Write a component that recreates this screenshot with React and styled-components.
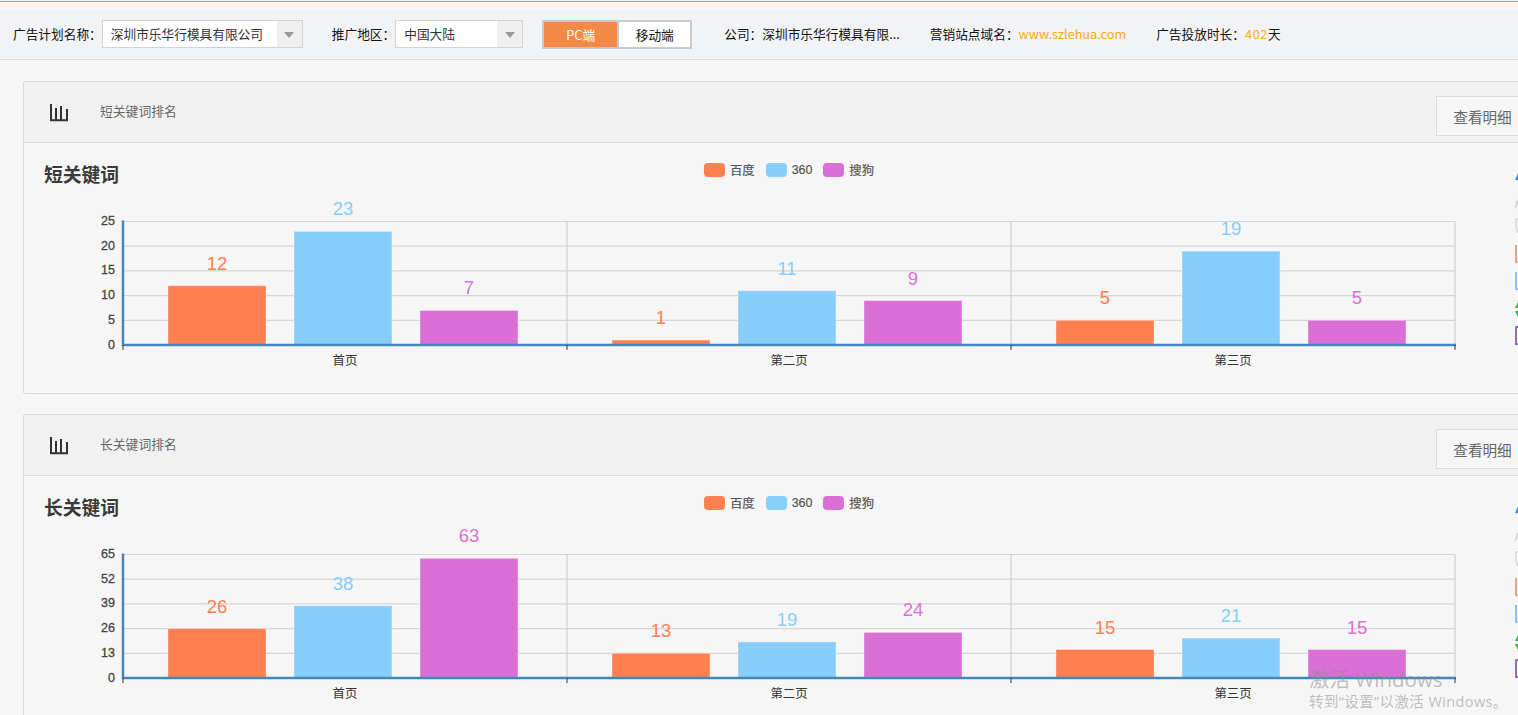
import React from 'react';
import styled, { createGlobalStyle } from 'styled-components';

const GlobalStyle = createGlobalStyle`
  html, body {
    margin: 0;
    height: 100%;
    overflow: hidden;
    background: #f6f6f6;
    font-family: "Noto Sans CJK SC", "Liberation Sans", sans-serif;
  }
  * { box-sizing: border-box; }
`;

const Page = styled.div`
  width: 1518px;
  height: 715px;
  overflow: hidden;
  position: relative;
  background: #f6f6f6;
`;

const TopStripe = styled.div`
  height: 9px;
  background: #f8f8f8;
  border-top: 1px solid #f6f6f6;
  &::before {
    content: '';
    display: block;
    height: 1px;
    background: #e58a52;
  }
`;

const Toolbar = styled.div`
  height: 51px;
  display: flex;
  align-items: center;
  padding: 0 0 1px 13px;
  background: #f2f3f5;
  border-bottom: 1px solid #d9d9d9;
  font-size: 12.7px;
  color: #111;
  white-space: nowrap;
`;

const Label = styled.span`
  margin-left: ${({ $gap }) => $gap || 0}px;
`;

const Select = styled.div`
  width: ${({ $w }) => $w}px;
  height: 28px;
  display: flex;
  background: #fff;
  border: 1px solid #d4d4d4;
  color: #333;
`;

const SelectValue = styled.div`
  flex: 1;
  padding-left: 8px;
  line-height: 25px;
`;

const SelectArrow = styled.div`
  width: 25px;
  display: flex;
  align-items: center;
  justify-content: center;
  background: #efefef;
  &::after {
    content: '';
    border-left: 5px solid transparent;
    border-right: 5px solid transparent;
    border-top: 6px solid #999;
    margin-top: 2px;
  }
`;

const Switch = styled.div`
  display: flex;
  margin-left: 19px;
  height: 29px;
  margin-top: 1px;
  border: 2px solid #c8cacc;
`;

const SwitchItem = styled.div`
  width: ${({ $w }) => $w}px;
  line-height: 25px;
  text-align: center;
  color: ${({ $active }) => ($active ? '#fff' : '#111')};
  background: ${({ $active }) => ($active ? '#f28a45' : '#fff')};
  border-left: ${({ $active }) => ($active ? '0' : '2px solid #c8cacc')};
`;

const InfoGroup = styled.div`
  display: flex;
  align-items: center;
  margin-left: ${({ $gap }) => $gap}px;
`;

const Accent = styled.span`
  color: #fea90f;
  letter-spacing: ${({ $wide }) => ($wide ? '0.6px' : '0')};
`;

const Content = styled.div`
  padding: 21px 0 0 23px;
  display: flex;
  flex-direction: column;
  gap: 20px;
`;

const Panel = styled.section`
  width: 1532px;
  height: 313px;
  flex-shrink: 0;
  border: 1px solid #dcdcdc;
  border-radius: 2px 0 0 2px;
  background: #f6f6f6;
`;

const PanelHead = styled.div`
  height: 61px;
  display: flex;
  align-items: center;
  padding: 0 25px;
  background: #f1f1f1;
  border-bottom: 1px solid #dcdcdc;
`;

const HeadIcon = styled.svg`
  width: 21px;
  height: 18px;
  flex-shrink: 0;
  margin-top: 2px;
`;

const HeadTitle = styled.span`
  margin-left: 30px;
  margin-bottom: 3px;
  font-size: 12.8px;
  color: #666;
`;

const DetailButton = styled.button`
  margin-left: auto;
  margin-top: 8px;
  width: 93px;
  height: 40px;
  padding: 0;
  border: 1px solid #dcdcdc;
  background: #f6f6f6;
  font: inherit;
  font-size: 14.6px;
  color: #666;
`;

const ChartArea = styled.div`
  position: relative;
`;

const ChartHead = styled.div`
  height: 51px;
  display: grid;
  grid-template-columns: 1fr auto 1fr;
  padding-top: 20px;
`;

const ChartTitle = styled.h3`
  margin: -1px 0 0 20px;
  font-size: 18.8px;
  line-height: 24px;
  font-weight: 700;
  color: #3a3a3a;
`;

const Legend = styled.div`
  display: flex;
  align-items: center;
  height: 14px;
  gap: 11px;
`;

const LegendItem = styled.div`
  display: flex;
  align-items: center;
  gap: 5px;
  font-family: "Liberation Sans", "Noto Sans CJK SC", sans-serif;
  font-size: 12.4px;
  color: #555;
  -webkit-text-stroke: 0.2px #555;
`;

const Swatch = styled.i`
  width: 21px;
  height: 14px;
  border-radius: 4px;
  background: ${({ $c }) => $c};
`;

const Plot = styled.svg`
  display: block;
  font-family: "Liberation Sans", "Noto Sans CJK SC", sans-serif;
`;

const Toolbox = styled.svg`
  position: absolute;
  left: 1491px;
  top: 24px;
  width: 20px;
  height: 180px;
`;

const Watermark = styled.div`
  position: absolute;
  left: 1309px;
  top: 666px;
  color: rgba(140, 140, 140, 0.55);
  font-family: "Open Sans", "Noto Sans CJK SC", sans-serif;
  white-space: nowrap;
  pointer-events: none;
`;

const WatermarkTitle = styled.div`
  font-size: 20.5px;
  line-height: 26px;
`;

const WatermarkText = styled.div`
  font-size: 14.5px;
  letter-spacing: 0.4px;
  line-height: 20px;
`;

const SERIES = [
  { name: '百度', color: '#ff7f50' },
  { name: '360', color: '#87cefa' },
  { name: '搜狗', color: '#da70d6' },
];

const PAGES = ['首页', '第二页', '第三页'];
const AXIS_LEFT = 99;
const GROUP_W = 444;
const TOP = 27.5;
const BOTTOM = 151;
const BAR_OFFSETS = [45, 171, 297];
const BAR_W = 98;

const BarChartIcon = () => (
  <HeadIcon viewBox="0 0 21 18">
    <path d="M2 0v16M7 4v12M12 2v14M18 5v11M1 16.2h18" stroke="#333" strokeWidth="2" fill="none" />
  </HeadIcon>
);

const ChartPlot = ({ ticks, data }) => {
  const max = ticks[ticks.length - 1];
  const y = v => BOTTOM - (v / max) * (BOTTOM - TOP);
  const right = AXIS_LEFT + GROUP_W * 3;
  return (
    <Plot width="1530" height="198" viewBox="0 0 1530 198">
      {ticks.map(t => (
        <g key={t}>
          {t > 0 && <line x1={AXIS_LEFT} x2={right} y1={y(t)} y2={y(t)} stroke="#d6d6d6" strokeWidth="1.2" />}
          <text x="91" y={y(t) + 3.5} textAnchor="end" fontSize="12.5" fill="#444" stroke="#444" strokeWidth="0.3">{t}</text>
        </g>
      ))}
      {[1, 2, 3].map(i => (
        <line key={i} x1={AXIS_LEFT + GROUP_W * i} x2={AXIS_LEFT + GROUP_W * i} y1={TOP} y2={BOTTOM} stroke="#d0d0d0" strokeWidth="1.2" />
      ))}
      {data.map((group, g) =>
        group.map((v, s) => {
          const x = AXIS_LEFT + GROUP_W * g + BAR_OFFSETS[s];
          return (
            <g key={`${g}-${s}`}>
              <rect x={x} y={y(v)} width={BAR_W} height={BOTTOM - y(v)} fill={SERIES[s].color} stroke="#fff" strokeOpacity="0.35" />
              <text x={x + BAR_W / 2} y={y(v) - 16} textAnchor="middle" fontSize="18.5" fill={SERIES[s].color}>{v}</text>
            </g>
          );
        })
      )}
      <line x1={AXIS_LEFT} x2={AXIS_LEFT} y1={TOP - 1} y2={BOTTOM + 1} stroke="#4488bb" strokeWidth="2.5" />
      <line x1={AXIS_LEFT - 1} x2={right + 1} y1={BOTTOM} y2={BOTTOM} stroke="#4488bb" strokeWidth="2.5" />
      {[0, 1, 2, 3].map(i => (
        <line key={i} x1={AXIS_LEFT + GROUP_W * i} x2={AXIS_LEFT + GROUP_W * i} y1={BOTTOM} y2={BOTTOM + 5} stroke="#333" />
      ))}
      {PAGES.map((p, i) => (
        <text key={p} x={AXIS_LEFT + GROUP_W * i + GROUP_W / 2} y="171" textAnchor="middle" fontSize="12.4" fill="#333" fontFamily="Noto Sans CJK SC, sans-serif">{p}</text>
      ))}
    </Plot>
  );
};

// only the left edge of the toolbox is inside the window
const ChartToolbox = () => (
  <Toolbox viewBox="0 0 20 180">
    <path d="M0 13L3 6V13z" fill="#3a8ee6" />
    <path d="M0 41L3 33" stroke="#d0d0d0" strokeWidth="1.5" fill="none" />
    <path d="M3 52H1v9l2 5" stroke="#d8d8d8" strokeWidth="1.5" fill="none" />
    <path d="M1 78v17h3" stroke="#e5a67c" strokeWidth="2" fill="none" />
    <path d="M1 105v17h3" stroke="#87c3fa" strokeWidth="2" fill="none" />
    <path d="M3 135L0 141h3zM0 144h3v6z" fill="#32b24a" />
    <path d="M4 160H1v17h3" stroke="#9b6fc0" strokeWidth="2" fill="none" />
  </Toolbox>
);

const KeywordPanel = ({ head, title, ticks, data }) => (
  <Panel>
    <PanelHead>
      <BarChartIcon />
      <HeadTitle>{head}</HeadTitle>
      <DetailButton>查看明细</DetailButton>
    </PanelHead>
    <ChartArea>
      <ChartHead>
        <ChartTitle>{title}</ChartTitle>
        <Legend>
          {SERIES.map(s => (
            <LegendItem key={s.name}>
              <Swatch $c={s.color} />
              {s.name}
            </LegendItem>
          ))}
        </Legend>
      </ChartHead>
      <ChartPlot ticks={ticks} data={data} />
      <ChartToolbox />
    </ChartArea>
  </Panel>
);

const App = () => (
  <Page>
    <GlobalStyle />
    <TopStripe />
    <Toolbar>
      <Label>广告计划名称：</Label>
      <Select $w={201}>
        <SelectValue>深圳市乐华行模具有限公司</SelectValue>
        <SelectArrow />
      </Select>
      <Label $gap={29}>推广地区：</Label>
      <Select $w={128}>
        <SelectValue>中国大陆</SelectValue>
        <SelectArrow />
      </Select>
      <Switch>
        <SwitchItem $active $w={73}>PC端</SwitchItem>
        <SwitchItem $w={73}>移动端</SwitchItem>
      </Switch>
      <InfoGroup $gap={32}>公司：深圳市乐华行模具有限...</InfoGroup>
      <InfoGroup $gap={30}>
        营销站点域名：<Accent>www.szlehua.com</Accent>
      </InfoGroup>
      <InfoGroup $gap={30}>
        广告投放时长：<Accent $wide>402</Accent>天
      </InfoGroup>
    </Toolbar>
    <Content>
      <KeywordPanel
        head="短关键词排名"
        title="短关键词"
        ticks={[0, 5, 10, 15, 20, 25]}
        data={[[12, 23, 7], [1, 11, 9], [5, 19, 5]]}
      />
      <KeywordPanel
        head="长关键词排名"
        title="长关键词"
        ticks={[0, 13, 26, 39, 52, 65]}
        data={[[26, 38, 63], [13, 19, 24], [15, 21, 15]]}
      />
    </Content>
    <Watermark>
      <WatermarkTitle>激活 Windows</WatermarkTitle>
      <WatermarkText>转到“设置”以激活 Windows。</WatermarkText>
    </Watermark>
  </Page>
);

export default App;
